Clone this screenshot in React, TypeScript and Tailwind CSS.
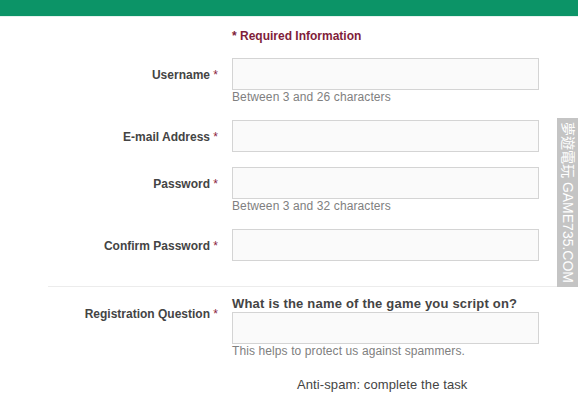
export default function App() {
  const label = "w-[218px] shrink-0 text-right text-[12px] font-bold text-[#444]";
  const input = "block w-[307px] h-[32px] border border-[#d4d4d4] bg-[#fafafa]";
  const hint = "text-[12px] text-[#808080] leading-[14px] mt-[0px] tracking-[0.1px]";
  const star = <span className="text-[#8a2440] font-normal"> *</span>;

  return (
    <div
      className="relative w-[578px] h-[406px] overflow-hidden bg-white"
      style={{ fontFamily: '"Liberation Sans", Arial, sans-serif' }}
    >
      <div className="h-[17px] bg-[#0c9467] border-b border-[#e4f3ee]" />

      <div className="pl-[232px] pt-[12px] text-[12px] font-bold text-[#7f1d3a] leading-[14px]">
        * Required Information
      </div>

      <div className="flex items-start mt-[15px]">
        <div className={label + " pt-[8px]"}>Username{star}</div>
        <div className="ml-[14px]">
          <div className={input} />
          <div className={hint}>Between 3 and 26 characters</div>
        </div>
      </div>

      <div className="flex items-start mt-[16px]">
        <div className={label + " pt-[8px]"}>E-mail Address{star}</div>
        <div className="ml-[14px]">
          <div className={input} />
        </div>
      </div>

      <div className="flex items-start mt-[15px]">
        <div className={label + " pt-[8px]"}>Password{star}</div>
        <div className="ml-[14px]">
          <div className={input} />
          <div className={hint}>Between 3 and 32 characters</div>
        </div>
      </div>

      <div className="flex items-start mt-[16px]">
        <div className={label + " pt-[8px]"}>Confirm Password{star}</div>
        <div className="ml-[14px]">
          <div className={input} />
        </div>
      </div>

      <div className="ml-[48px] w-[510px] mt-[25px] border-t border-[#ececec]" />

      <div className="flex items-start mt-[9px]">
        <div className={label + " pt-[9px]"}>Registration Question{star}</div>
        <div className="ml-[14px]">
          <div className="text-[13px] font-bold text-[#444] leading-[15px] tracking-[0.2px]">
            What is the name of the game you script on?
          </div>
          <div className={input + " mt-[1px]"} />
          <div className={hint}>This helps to protect us against spammers.</div>
        </div>
      </div>

      <div className="pl-[297px] mt-[19px] text-[13px] text-[#444] leading-[15px] tracking-[0.1px]">
        Anti-spam: complete the task
      </div>

      <div className="absolute right-0 top-[118px] w-[21px] h-[169px] bg-[#c4c4c4] flex items-center justify-center">
        <span
          className="text-white text-[14px] whitespace-nowrap leading-[21px]"
          style={{
            writingMode: "vertical-rl",
            textOrientation: "sideways",
            fontFamily: '"Liberation Sans", "Noto Sans CJK TC", sans-serif',
          }}
        >
          夢遊電玩 GAME735.COM
        </span>
      </div>
    </div>
  );
}
